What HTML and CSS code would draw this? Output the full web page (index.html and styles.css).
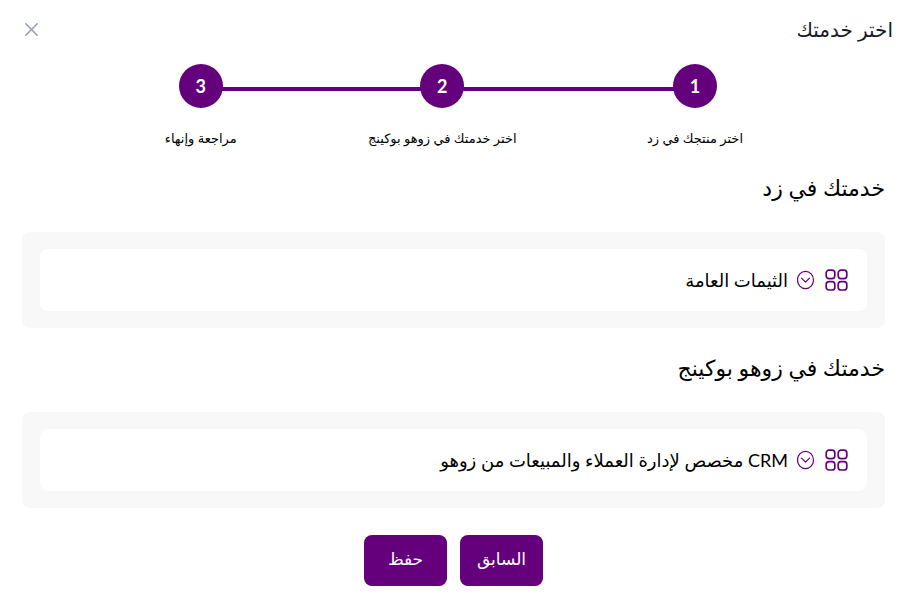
FILE: index.html
```html
<!DOCTYPE html>
<html lang="ar" dir="rtl">
<head>
    <meta charset="UTF-8">
    <meta name="viewport" content="width=device-width, initial-scale=1.0">
    <title>اختر خدمتك</title>
    <link rel="stylesheet" href="styles.css">
</head>
<body>
    <header class="header">
        <h1>اختر خدمتك</h1>
        <button class="close-btn" type="button" aria-label="إغلاق">
            <svg width="13" height="13" viewBox="0 0 13 13" fill="none" stroke="currentColor" stroke-width="1.6" stroke-linecap="round">
                <path d="M.8.8l11.4 11.4M12.2.8L.8 12.2"/>
            </svg>
        </button>
    </header>
    <main class="content">
        <ol class="steps">
            <li class="step">
                <span class="circle">1</span>
                <span class="label">اختر منتجك في زد</span>
            </li>
            <li class="step">
                <span class="circle">2</span>
                <span class="label">اختر خدمتك في زوهو بوكينج</span>
            </li>
            <li class="step">
                <span class="circle">3</span>
                <span class="label">مراجعة وإنهاء</span>
            </li>
        </ol>
        <h2>خدمتك في زد</h2>
        <div class="panel">
            <button class="service" type="button" aria-expanded="false">
                <svg class="grid-icon" width="24" height="24" viewBox="0 0 24 24" fill="none" stroke="currentColor" stroke-width="1.7">
                    <rect x="1.2" y="2.2" width="8.6" height="8.4" rx="2.8"/>
                    <rect x="13.2" y="2.2" width="8.6" height="8.4" rx="2.8"/>
                    <rect x="1.2" y="13.6" width="8.6" height="8.4" rx="2.8"/>
                    <rect x="13.2" y="13.6" width="8.6" height="8.4" rx="2.8"/>
                </svg>
                <svg class="arrow-icon" width="18" height="20" viewBox="0 0 18 20" fill="none" stroke="currentColor" stroke-width="1.2" stroke-linecap="round" stroke-linejoin="round">
                    <ellipse cx="8.5" cy="10" rx="8" ry="8.6"/>
                    <path d="M4.5 8.2l4 4 4-4"/>
                </svg>
                <span>الثيمات العامة</span>
            </button>
        </div>
        <h2>خدمتك في زوهو بوكينج</h2>
        <div class="panel">
            <button class="service" type="button" aria-expanded="false">
                <svg class="grid-icon" width="24" height="24" viewBox="0 0 24 24" fill="none" stroke="currentColor" stroke-width="1.7">
                    <rect x="1.2" y="2.2" width="8.6" height="8.4" rx="2.8"/>
                    <rect x="13.2" y="2.2" width="8.6" height="8.4" rx="2.8"/>
                    <rect x="1.2" y="13.6" width="8.6" height="8.4" rx="2.8"/>
                    <rect x="13.2" y="13.6" width="8.6" height="8.4" rx="2.8"/>
                </svg>
                <svg class="arrow-icon" width="18" height="20" viewBox="0 0 18 20" fill="none" stroke="currentColor" stroke-width="1.2" stroke-linecap="round" stroke-linejoin="round">
                    <ellipse cx="8.5" cy="10" rx="8" ry="8.6"/>
                    <path d="M4.5 8.2l4 4 4-4"/>
                </svg>
                <span>CRM مخصص لإدارة العملاء والمبيعات من زوهو</span>
            </button>
        </div>
        <div class="actions">
            <button class="btn" type="button">السابق</button>
            <button class="btn" type="button">حفظ</button>
        </div>
    </main>
</body>
</html>
```
FILE: styles.css
```css
* {
    box-sizing: border-box;
}
body {
    margin: 0;
    background: #fff;
    color: #000;
    font-family: Lato, "DejaVu Sans", sans-serif;
}
button {
    border: none;
    font-family: inherit;
    cursor: pointer;
}
.header {
    display: flex;
    align-items: center;
    justify-content: space-between;
    padding: 13px 11px 19px 20px;
}
h1 {
    margin: 0;
    color: #1a1a27;
    font-size: 20px;
    font-weight: normal;
    line-height: 32px;
}
.close-btn {
    display: flex;
    padding: 5px;
    background: none;
    color: #97a0b3;
}
.content {
    padding: 0 19px 16px 22px;
}
.steps {
    display: grid;
    grid-template-columns: 20fr 25fr 18fr;
    width: 82%;
    margin: 0 auto;
    padding: 0;
    list-style: none;
}
.step {
    position: relative;
    display: flex;
    flex-direction: column;
    align-items: center;
    gap: 20px;
}
/* line that joins the circles */
.step::before {
    content: "";
    position: absolute;
    top: 23px;
    left: 0;
    right: 0;
    height: 4px;
    background: #65007c;
}
.step:first-child::before {
    right: 50%;
}
.step:last-child::before {
    left: 50%;
}
.circle {
    position: relative;
    width: 44px;
    border-radius: 50%;
    background: #65007c;
    color: #fff;
    font-size: 18px;
    font-weight: bold;
    line-height: 44px;
    text-align: center;
}
.label {
    font-size: 13px;
    line-height: 20px;
    white-space: nowrap;
}
h2 {
    margin: 0;
    padding: 22px 0 26px;
    font-size: 22px;
    font-weight: normal;
    line-height: 36px;
}
.panel {
    padding: 17px 18px;
    border-radius: 8px;
    background: #f8f8f8;
}
.service {
    display: flex;
    align-items: center;
    width: 100%;
    padding: 16px 18px;
    border-radius: 8px;
    background: #fff;
    color: #000;
    font-size: 18px;
    line-height: 30px;
    text-align: start;
}
.service svg {
    flex: none;
    color: #65007c;
}
.grid-icon {
    margin-left: 10px;
}
.arrow-icon {
    margin-left: 9px;
}
.actions {
    display: flex;
    justify-content: center;
    gap: 13px;
    padding-top: 27px;
}
.btn {
    min-width: 83px;
    padding: 8px 12px 11px;
    border-radius: 8px;
    background: #65007c;
    color: #fff;
    font-size: 17px;
    line-height: 32px;
}
```
